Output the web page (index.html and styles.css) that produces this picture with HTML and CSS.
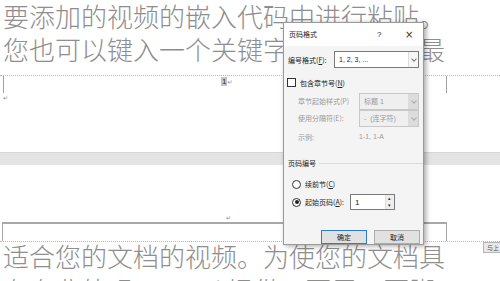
FILE: index.html
```html
<!DOCTYPE html>
<html lang="zh">
<head>
<meta charset="utf-8">
<link rel="stylesheet" href="styles.css">
</head>
<body>
<div class="screen">
  <div class="doc">
    <div class="top"></div>
    <div class="hdr">
      <div class="hdr-row">
        <span class="corner"></span>
        <span class="pnum"><span class="pn">1</span><span class="pm">↵</span></span>
        <span class="corner"></span>
      </div>
      <div class="pm para">↵</div>
    </div>
    <div class="gap"></div>
    <div class="page2">
      <div class="pm mid">↵</div>
    </div>
    <div class="ftr"></div>
    <div class="dots"></div>
  </div>

  <div class="sub sub-top">
    <p>要添加的视频的嵌入代码中进行粘贴。</p>
    <p>您也可以键入一个关键字以联机搜索最</p>
  </div>
  <div class="sub sub-bot">
    <p>适合您的文档的视频。为使您的文档具</p>
    <p>有专业外观，Word 提供了页眉、页脚、</p>
  </div>

  <div class="tab">与上</div>

  <div class="dialog">
    <div class="title">
      <span class="ttl">页码格式</span>
      <span class="help">?</span>
      <span class="close">×</span>
    </div>
    <div class="row r-fmt">
      <span class="lbl">编号格式(<u>F</u>):</span>
      <div class="sel sel-wide"><span>1, 2, 3, ...</span><i class="arr"></i></div>
    </div>
    <div class="row r-chk">
      <span class="chk"></span>
      <span class="lbl">包含章节号(<u>N</u>)</span>
    </div>
    <div class="row r-dis">
      <span class="lbl dis">章节起始样式(P)</span>
      <div class="sel sel-dis"><span>标题 1</span><i class="arr"></i></div>
    </div>
    <div class="row r-dis">
      <span class="lbl dis">使用分隔符(E):</span>
      <div class="sel sel-dis"><span>-&nbsp; (连字符)</span><i class="arr"></i></div>
    </div>
    <div class="row r-ex">
      <span class="lbl dis">示例:</span>
      <span class="lbl dis ex-val">1-1, 1-A</span>
    </div>
    <div class="row r-grp">
      <span class="lbl">页码编号</span>
      <span class="grp-line"></span>
    </div>
    <div class="row r-rad">
      <span class="rad"></span>
      <span class="lbl">续前节(<u>C</u>)</span>
    </div>
    <div class="row r-rad">
      <span class="rad on"></span>
      <span class="lbl">起始页码(<u>A</u>):</span>
      <div class="spin"><span>1</span><span class="spin-btns"><i>▴</i><i>▾</i></span></div>
    </div>
    <div class="row r-btn">
      <span class="btn ok">确定</span>
      <span class="btn">取消</span>
    </div>
  </div>
</div>
</body>
</html>
```

FILE: styles.css
```css
* { box-sizing: border-box; margin: 0; padding: 0; }
html, body { width: 500px; height: 281px; overflow: hidden; background: #fff; }
body { font-family: "Noto Sans CJK SC", "Noto Sans", sans-serif; }

.screen { position: relative; width: 500px; height: 281px; overflow: hidden; background: #fff; }

.doc { display: flex; flex-direction: column; width: 500px; }
.top { height: 75px; }
.hdr { height: 77px; border-top: 1px dotted #b8b8b8; position: relative; }
.hdr-row { display: flex; align-items: flex-start; height: 17px; padding-left: 3px; }
.corner { display: block; width: 1px; height: 17px; background: #a0a0a0; }
.pnum { display: flex; align-items: center; margin-left: 217px; width: 225px; height: 10px; }
.pn { font-family: "Liberation Sans", sans-serif; font-size: 8px; line-height: 9px; background: #c4c4c4; color: #333; padding: 0 1px; }
.pm { font-family: "DejaVu Sans", sans-serif; font-size: 6px; color: #888; line-height: 7px; }
.para { padding-left: 3px; margin-top: 1px; }

.gap { height: 13px; background: #e4e4e4; border-top: 1px solid #d6d6d6; }
.page2 { height: 57px; display: flex; align-items: flex-end; padding-bottom: 1px; }
.mid { margin-left: 226px; }
.ftr { height: 19px; margin-left: 2px; width: 445px; border-top: 2px solid #a8a8a8; border-left: 1px solid #a8a8a8; border-right: 1px solid #a8a8a8; }
.dots { height: 2px; border-top: 1px dotted #b8b8b8; }

.sub { position: absolute; left: 3px; font-size: 26px; line-height: 33px; color: #8e8e8e; font-weight: 300; white-space: nowrap; }
.sub p { height: 33px; }
.sub-top { top: -1px; }
.sub-bot { top: 239px; line-height: 34px; }
.sub-bot p { height: 34px; }

.tab { position: absolute; left: 483px; top: 242px; width: 20px; height: 11px; background: #e8e8e8; border: 1px solid #b5b5b5; font-size: 6px; line-height: 9px; color: #555; padding-left: 3px; }

.dialog { position: absolute; left: 283px; top: 22px; width: 141px; height: 223px; background: #f4f4f4; border: 1px solid #9a9a9a; box-shadow: 2px 1px 5px rgba(0,0,0,0.35); display: flex; flex-direction: column; font-size: 7px; color: #222; }
.title { height: 23px; display: flex; align-items: center; padding-left: 5px; background: #fff; }
.ttl { font-size: 7px; width: 88px; }
.help { font-family: "Liberation Sans", sans-serif; font-size: 8px; width: 28px; }
.close { font-family: "DejaVu Sans", sans-serif; font-size: 10px; color: #333; }

.row { display: flex; align-items: center; }
.lbl { white-space: nowrap; line-height: 10px; }
.lbl u { text-decoration: underline; }
.dis { color: #9a9a9a; }

.r-fmt { height: 22px; padding-left: 4px; margin-top: 3px; }
.r-fmt .lbl { width: 46px; }
.sel { height: 17px; display: flex; align-items: center; border: 1px solid #7a7a7a; background: #fff; font-family: "Liberation Sans", "Noto Sans CJK SC", sans-serif; font-size: 7px; padding-left: 4px; white-space: nowrap; overflow: hidden; }
.sel span { flex: 1; }
.sel .arr { width: 10px; height: 100%; border-left: 1px solid #ddd; position: relative; background: #f6f6f6; flex: none; }
.sel .arr::after { content: ""; position: absolute; left: 3px; top: 5px; width: 3px; height: 3px; border-right: 1px solid #777; border-bottom: 1px solid #777; transform: rotate(45deg); }
.sel-wide { width: 85px; }
.sel-dis { width: 60px; border-color: #c8c8c8; background: #efefef; color: #9a9a9a; }
.sel-dis .arr { background: #dcdcdc; border-left-color: #dcdcdc; }
.sel-dis .arr::after { border-color: #aaa; }

.r-chk { height: 20px; padding-left: 3px; margin-top: 2px; }
.chk { width: 9px; height: 9px; border: 1px solid #333; background: #fff; margin-right: 4px; }

.r-dis { height: 17px; padding-left: 14px; }
.r-dis .lbl { width: 61px; }
.r-ex { height: 21px; padding-left: 14px; }
.r-ex .lbl:first-child { width: 61px; }
.ex-val { font-family: "Liberation Sans", sans-serif; font-size: 7px; }

.r-grp { height: 28px; padding-left: 4px; padding-top: 4px; }
.grp-line { flex: 1; height: 1px; background: #dcdcdc; margin-left: 3px; }

.r-rad { height: 18px; padding-left: 8px; }
.rad { width: 9px; height: 9px; border: 1px solid #333; border-radius: 50%; background: #fff; margin-right: 4px; position: relative; }
.rad.on::after { content: ""; position: absolute; left: 1.5px; top: 1.5px; width: 4px; height: 4px; border-radius: 50%; background: #222; }
.spin { margin-left: 6px; width: 45px; height: 16px; border: 1px solid #7a7a7a; background: #fff; display: flex; align-items: center; padding-left: 4px; font-family: "Liberation Sans", sans-serif; font-size: 8px; }
.spin span:first-child { flex: 1; }
.spin-btns { width: 9px; height: 100%; display: flex; flex-direction: column; border-left: 1px solid #ddd; }
.spin-btns i { flex: 1; font-style: normal; font-size: 5px; line-height: 7px; text-align: center; color: #333; background: #eee; }

.r-btn { height: 15px; margin-top: 18px; padding-left: 37px; gap: 7px; }
.btn { width: 46px; height: 14px; border: 1px solid #adadad; background: #e1e1e1; display: flex; align-items: center; justify-content: center; font-size: 7px; }
.btn.ok { border: 1.5px solid #2a7bd6; }
```
